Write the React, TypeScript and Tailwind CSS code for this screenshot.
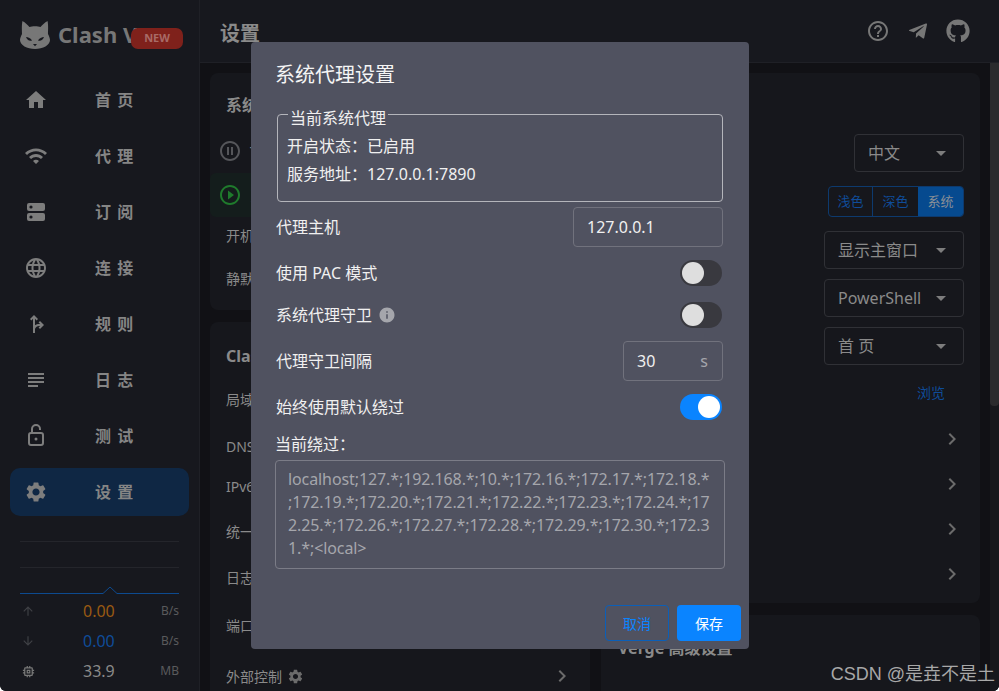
import {
  MdArrowDownward,
  MdArrowDropDown,
  MdArrowUpward,
  MdChevronRight,
  MdForkRight,
  MdHelpOutline,
  MdHome,
  MdInfo,
  MdLanguage,
  MdMemory,
  MdPauseCircleOutline,
  MdPlayCircleOutline,
  MdSettings,
  MdSubject,
  MdWifi,
} from "react-icons/md";
import { FaGithub } from "react-icons/fa";
import type { ReactNode } from "react";

const ServerIcon = () => (
  <svg viewBox="0 0 24 24" className="w-[24px] h-[24px]">
    <rect x="3" y="3" width="18" height="8" rx="2" fill="currentColor" />
    <rect x="3" y="13" width="18" height="8" rx="2" fill="currentColor" />
    <circle cx="7" cy="7" r="1.6" fill="#17181e" />
    <circle cx="7" cy="17" r="1.6" fill="#17181e" />
  </svg>
);

const LockIcon = () => (
  <svg viewBox="0 0 24 24" className="w-[24px] h-[24px]" fill="none" stroke="currentColor" strokeWidth="2">
    <rect x="5" y="9" width="14" height="12" rx="2" />
    <path d="M8 9V5a4 4 0 0 1 8 0v1" />
    <circle cx="12" cy="15" r="1.5" fill="currentColor" stroke="none" />
  </svg>
);

const nav = [
  { label: "首 页", icon: <MdHome size={24} /> },
  { label: "代 理", icon: <MdWifi size={24} /> },
  { label: "订 阅", icon: <ServerIcon /> },
  { label: "连 接", icon: <MdLanguage size={24} /> },
  { label: "规 则", icon: <MdForkRight size={24} /> },
  { label: "日 志", icon: <MdSubject size={24} /> },
  { label: "测 试", icon: <LockIcon /> },
  { label: "设 置", icon: <MdSettings size={24} />, active: true },
];

const bypassLines = [
  "localhost;127.*;192.168.*;10.*;172.16.*;172.17.*;172.18.*",
  ";172.19.*;172.20.*;172.21.*;172.22.*;172.23.*;172.24.*;17",
  "2.25.*;172.26.*;172.27.*;172.28.*;172.29.*;172.30.*;172.3",
  "1.*;<local>",
];

const CatLogo = () => (
  <svg viewBox="0 0 30 30" className="w-[30px] h-[30px]" fill="#777777">
    <path d="M2.5 1 C3 1 8 5 9.5 7 C12 6 18 6 20.5 7 C22 5 27 1 27.5 1 C28.5 5 28 11 28 14 C29.5 17 30 19 30 20 C30 25 23 29 15 29 C7 29 0 25 0 20 C0 19 .5 17 2 14 C2 11 1.5 5 2.5 1 Z" />
    <path d="M6 17 C8 17 11 18.5 12 20.5 C9.5 21.5 7 20 6 17 Z" fill="#17181e" />
    <path d="M24 17 C22 17 19 18.5 18 20.5 C20.5 21.5 23 20 24 17 Z" fill="#17181e" />
    <path d="M13 24 h4 l-2 2.2 Z" fill="#17181e" />
  </svg>
);

const TelegramIcon = () => (
  <svg viewBox="0 0 24 24" className="w-[24px] h-[24px]" fill="currentColor">
    <path d="M9.78 18.65l.28-4.23 7.68-6.92c.34-.31-.07-.46-.52-.19L7.74 13.3 3.64 12c-.88-.25-.89-.86.2-1.3l15.97-6.16c.73-.33 1.43.18 1.15 1.3l-2.72 12.81c-.19.91-.74 1.13-1.5.71L12.6 16.3l-1.99 1.93c-.23.23-.42.42-.83.42z" />
  </svg>
);

const Sidebar = () => (
  <aside className="w-[200px] shrink-0 h-full bg-[#17181e] border-r border-[#1f2026] flex flex-col">
    <div className="relative h-[62px] pl-[20px] pt-[20px] flex items-start gap-[8px]">
      <CatLogo />
      <span className="text-[22px] leading-[28px] font-bold text-[#777777]">Clash V</span>
      <span className="absolute left-[131px] top-[28px] w-[52px] h-[21px] rounded-[7px] bg-[#7f211b] text-[#a86a66] text-[11px] font-bold flex items-center justify-center">
        NEW
      </span>
    </div>
    <nav className="mt-[14px] px-[10px] flex flex-col gap-[8px]">
      {nav.map((item) => (
        <div
          key={item.label}
          className={`h-[48px] rounded-[10px] flex items-center pl-[14px] ${item.active ? "bg-[#0f2744]" : ""}`}
        >
          <span className="w-[24px] flex justify-center text-[#7d7d7d]">{item.icon}</span>
          <span className="ml-[47px] text-[16px] font-bold text-[#858585] [word-spacing:2px]">{item.label}</span>
        </div>
      ))}
    </nav>
    <div className="mt-[25px] px-[20px] flex flex-col">
      <div className="h-[45px] flex flex-col">
        <div className="h-px bg-[#24252b]" />
        <div className="h-px bg-[#24252b] mt-[25px]" />
      </div>
      <svg viewBox="0 0 159 8" className="w-[159px] h-[8px]" fill="none">
        <path d="M0 7.5 H83 L90 1 L97 7.5 H159" stroke="#0d4a8f" strokeWidth="1" />
      </svg>
      <div className="mt-[6px] flex flex-col gap-[8px]">
        <Stat icon={<MdArrowUpward size={14} />} value="0.00" unit="B/s" color="text-[#9a5a12]" />
        <Stat icon={<MdArrowDownward size={14} />} value="0.00" unit="B/s" color="text-[#0f4c99]" />
        <Stat icon={<MdMemory size={15} />} value="33.9" unit="MB" color="text-[#8a8a8a]" iconColor="text-[#777777]" />
      </div>
    </div>
  </aside>
);

const Stat = ({
  icon,
  value,
  unit,
  color,
  iconColor = "text-[#3f4045]",
}: {
  icon: ReactNode;
  value: string;
  unit: string;
  color: string;
  iconColor?: string;
}) => (
  <div className="h-[22px] flex items-center">
    <span className={`w-[16px] flex justify-center ${iconColor}`}>{icon}</span>
    <span className={`ml-[47px] w-[60px] text-[16px] ${color}`}>{value}</span>
    <span className="ml-auto text-[12px] text-[#5a5a5c]">{unit}</span>
  </div>
);

const LeftRow = ({ label, className = "" }: { label: ReactNode; className?: string }) => (
  <div className={`flex items-center pl-[16px] pr-[16px] text-[14px] text-[#8a8a8a] ${className}`}>{label}</div>
);

const Select = ({ value, width }: { value: string; width: string }) => (
  <div className={`${width} h-[38px] rounded-[4px] border border-[#303136] flex items-center pl-[13px] pr-[10px] text-[16px] text-[#8a8a8a]`}>
    <span className="flex-1">{value}</span>
    <MdArrowDropDown size={24} className="text-[#7d7d7d]" />
  </div>
);

const SelectRow = ({ children, className = "" }: { children: ReactNode; className?: string }) => (
  <div className={`flex justify-end pr-[16px] ${className}`}>{children}</div>
);

const Content = () => (
  <div className="flex-1 min-h-0 flex bg-[#111115]">
    <div className="flex-1 min-w-0 pt-[10px] pl-[10px] pr-[10px] flex gap-[11px] overflow-hidden">
      <div className="w-[380px] shrink-0 flex flex-col gap-[12px]">
        <section className="h-[237px] shrink-0 rounded-[8px] bg-[#16171c] flex flex-col">
          <h2 className="pl-[16px] pt-[20px] h-[56px] text-[16px] font-bold text-[#8a8a8a]">系统设置</h2>
          <div className="h-[44px] flex items-center pl-[8px] text-[#55565a]">
            <MdPauseCircleOutline size={24} />
            <span className="ml-[8px] text-[14px] text-[#8a8a8a]">TUN 模式</span>
          </div>
          <div className="h-[44px] flex items-center pl-[8px] bg-[#141d1c] text-[#1f7a2c] rounded-[6px]">
            <MdPlayCircleOutline size={24} />
            <span className="ml-[8px] text-[14px] text-[#8a8a8a]">系统代理</span>
          </div>
          <LeftRow label="开机自启" className="h-[37px]" />
          <LeftRow label="静默启动" className="h-[48px]" />
        </section>
        <section className="flex-1 rounded-t-[8px] bg-[#16171c] flex flex-col">
          <h2 className="pl-[16px] pt-[22px] h-[54px] text-[16px] font-bold text-[#8a8a8a]">Clash 设置</h2>
          <LeftRow label="局域网连接" className="h-[46px]" />
          <LeftRow label="DNS 覆写" className="h-[48px]" />
          <LeftRow label="IPv6" className="h-[33px]" />
          <LeftRow label="统一延迟" className="h-[56px]" />
          <LeftRow label="日志等级" className="h-[36px]" />
          <LeftRow label="端口设置" className="h-[61px]" />
          <LeftRow
            className="h-[40px]"
            label={
              <>
                <span>外部控制</span>
                <MdSettings size={17} className="ml-[5px] text-[#6b6b6b]" />
                <MdChevronRight size={24} className="ml-auto text-[#6b6b6b]" />
              </>
            }
          />
        </section>
      </div>
      <div className="w-[379px] shrink-0 flex flex-col gap-[12px]">
        <section className="h-[530px] shrink-0 rounded-[8px] bg-[#16171c] flex flex-col">
          <div className="h-[61px]" />
          <SelectRow>
            <Select value="中文" width="w-[110px]" />
          </SelectRow>
          <SelectRow className="mt-[14px]">
            <div className="h-[31px] flex rounded-[4px] border border-[#0d3a6e] text-[13px] text-[#0f4c99]">
              <span className="w-[44px] flex items-center justify-center border-r border-[#0d3a6e]">浅色</span>
              <span className="w-[45px] flex items-center justify-center">深色</span>
              <span className="w-[45px] flex items-center justify-center bg-[#064a8f] text-[#8a8f96] rounded-r-[3px]">系统</span>
            </div>
          </SelectRow>
          <SelectRow className="mt-[14px]">
            <Select value="显示主窗口" width="w-[140px]" />
          </SelectRow>
          <SelectRow className="mt-[10px]">
            <Select value="PowerShell" width="w-[140px]" />
          </SelectRow>
          <SelectRow className="mt-[10px]">
            <Select value="首 页" width="w-[140px]" />
          </SelectRow>
          <SelectRow className="mt-[17px] mb-[12px] pr-[35px]">
            <span className="text-[14px] leading-[22px] text-[#0f4c99]">浏览</span>
          </SelectRow>
          {[0, 1, 2, 3].map((i) => (
            <div key={i} className="h-[45px] flex items-center justify-end pr-[16px] text-[#6b6b6b]">
              <MdChevronRight size={24} />
            </div>
          ))}
        </section>
        <section className="flex-1 rounded-t-[8px] bg-[#16171c] pl-[17px] pt-[21px]">
          <h2 className="text-[16px] font-bold text-[#8a8a8a]">Verge 高级设置</h2>
        </section>
      </div>
    </div>
    <div className="w-[9px] shrink-0 bg-[#17181c]">
      <div className="h-[343px] rounded-b-[4px] bg-[#2b2b2d]" />
    </div>
  </div>
);

const Main = () => (
  <main className="flex-1 min-w-0 h-full flex flex-col">
    <header className="h-[63px] shrink-0 bg-[#17181e] border-b border-[#1f2026] flex items-center pl-[20px] pr-[29px]">
      <h1 className="mt-[6px] text-[20px] font-bold text-[#8a8a8a]">设置</h1>
      <div className="ml-auto flex items-center gap-[16px] text-[#777777]">
        <MdHelpOutline size={24} />
        <TelegramIcon />
        <FaGithub size={24} />
      </div>
    </header>
    <Content />
  </main>
);

const Toggle = ({ on = false }: { on?: boolean }) => (
  <div className={`mr-[1px] w-[42px] h-[26px] rounded-full p-[2px] flex items-center ${on ? "justify-end bg-[#0a84ff]" : "bg-[#39393f]"}`}>
    <span className={`w-[22px] h-[22px] rounded-full ${on ? "bg-white" : "bg-[#dedede]"}`} />
  </div>
);

const ModalRow = ({ children, className = "" }: { children: ReactNode; className?: string }) => (
  <div className={`flex items-center justify-between pl-[1px] pr-[2px] text-[16px] text-[#f0f0f0] ${className}`}>{children}</div>
);

const Modal = () => (
  <div className="absolute left-[251px] top-[42px] w-[498px] h-[607px] rounded-[4px] bg-[#505260] flex flex-col pl-[24px] pr-[24px] font-['Noto_Sans','Noto_Sans_CJK_SC',sans-serif]">
    <h2 className="mt-[18px] h-[30px] text-[20px] leading-[30px] text-[#f5f5f5]">系统代理设置</h2>
    <div className="relative mt-[24px] ml-[2px] w-[446px] h-[88px] shrink-0 rounded-[4px] border border-[#b4b5bb] pl-[9px] pt-[17px] text-[#f0f0f0] text-[16px]">
      <span className="absolute left-[10px] top-[-8px] px-[2px] leading-[22px] bg-[#505260]">当前系统代理</span>
      <p className="h-[28px] leading-[28px]">开启状态：已启用</p>
      <p className="h-[28px] leading-[28px]">服务地址：127.0.0.1:7890</p>
    </div>
    <ModalRow className="mt-[5px] h-[40px]">
      <span>代理主机</span>
      <div className="w-[150px] h-[40px] rounded-[4px] border border-[#71727d] pl-[13px] flex items-center">127.0.0.1</div>
    </ModalRow>
    <ModalRow className="mt-[6px] h-[40px]">
      <span>使用 PAC 模式</span>
      <Toggle />
    </ModalRow>
    <ModalRow className="mt-[2px] h-[40px]">
      <span className="flex items-center gap-[6px]">
        系统代理守卫
        <MdInfo size={18} className="text-[#a5a6ac]" />
      </span>
      <Toggle />
    </ModalRow>
    <ModalRow className="mt-[6px] h-[40px]">
      <span>代理守卫间隔</span>
      <div className="w-[100px] h-[40px] rounded-[4px] border border-[#71727d] pl-[13px] pr-[14px] flex items-center justify-between">
        <span>30</span>
        <span className="text-[#a5a6ac]">s</span>
      </div>
    </ModalRow>
    <ModalRow className="mt-[6px] h-[40px]">
      <span>始终使用默认绕过</span>
      <Toggle on />
    </ModalRow>
    <p className="mt-[5px] h-[24px] leading-[24px] text-[16px] text-[#f0f0f0]">当前绕过：</p>
    <div className="mt-[4px] w-[450px] h-[109px] shrink-0 rounded-[4px] border border-[#7b7c87] pl-[12px] py-[7px] text-[16px] leading-[23px] tracking-[-0.1px] text-[#a5a6ac] whitespace-nowrap">
      {bypassLines.map((line) => (
        <div key={line}>{line}</div>
      ))}
    </div>
    <div className="mt-[36px] -mr-[16px] flex justify-end gap-[8px]">
      <button className="w-[64px] h-[36px] rounded-[4px] border border-[#0b5fb8] text-[14px] text-[#0a84ff]">取消</button>
      <button className="w-[64px] h-[36px] rounded-[4px] bg-[#0a84ff] text-[14px] text-white">保存</button>
    </div>
  </div>
);

export default function App() {
  return (
    <div className="relative w-[999px] h-[691px] overflow-hidden rounded-b-[6px] flex bg-[#17181e] font-['Noto_Sans','Noto_Sans_CJK_SC',sans-serif]">
      <Sidebar />
      <Main />
      <Modal />
      <span className="absolute right-[4px] bottom-[4px] text-[18px] leading-[26px] text-[#a8a8a8] font-['Liberation_Sans','Noto_Sans_CJK_SC',sans-serif]">
        CSDN @是垚不是土
      </span>
    </div>
  );
}
